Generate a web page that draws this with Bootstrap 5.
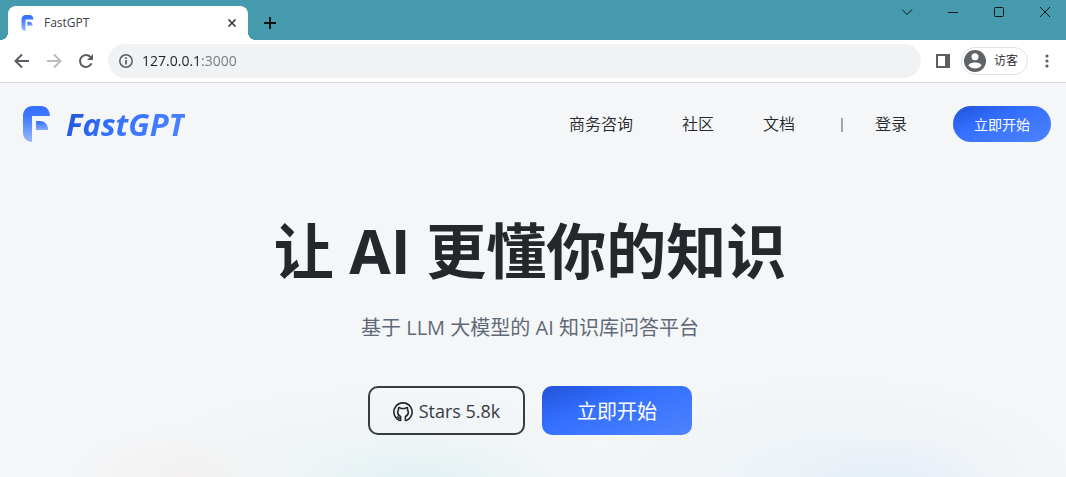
<!DOCTYPE html>
<html lang="zh-CN">
<head>
<meta charset="utf-8">
<meta name="viewport" content="width=device-width, initial-scale=1">
<title>FastGPT</title>
<link href="https://cdn.jsdelivr.net/npm/bootstrap@5.3.0/dist/css/bootstrap.min.css" rel="stylesheet">
<style>
  body { font-family: "Open Sans", "Noto Sans CJK SC", sans-serif; color: #24282c; background: #f4f6f8; overflow: hidden; }
  svg { display: block; flex: none; }
  .plain-btn { display: flex; align-items: center; justify-content: center; padding: 0; border: 0; background: none; color: inherit; }

  .tabstrip { height: 40px; padding-left: 8px; background: #469aad; color: #101416; }
  .tab { position: relative; width: 240px; height: 34px; padding: 0 10px 0 13px; background: #fff; border-radius: 8px 8px 0 0; font-size: 12px; color: #3c4043; }
  .tab::before, .tab::after { content: ""; position: absolute; bottom: 0; width: 8px; height: 8px; }
  .tab::before { right: 100%; background: radial-gradient(circle at 0 0, transparent 8px, #fff 8px); }
  .tab::after { left: 100%; background: radial-gradient(circle at 100% 0, transparent 8px, #fff 8px); }
  .tab-title { margin-left: 10px; }
  .new-tab { width: 44px; height: 34px; }
  .window-btns { margin-right: -2px; }
  .window-btn { width: 46px; height: 24px; }

  .toolbar { height: 43px; padding: 4px 16px 4px 8px; background: #fff; border-bottom: 1px solid #d9dce1; color: #5a5e63; }
  .tool-btn { width: 28px; height: 28px; }
  .address { height: 34px; padding-left: 11px; border-radius: 17px; background: #f0f2f4; }
  .address input { border: 0; outline: 0; padding: 0 0 2px 1px; font-size: 14px; color: transparent; background: linear-gradient(90deg, #202124 60px, #73777c 60px); -webkit-background-clip: text; background-clip: text; }
  .guest { height: 28px; padding: 0 9px 0 2px; border: 1px solid #dfe1e5; border-radius: 14px; font-size: 12px; font-weight: 350; color: #202124; }

  .site-header { padding: 23px 15px 0 23px; }
  .brand { gap: 16px; text-decoration: none; }
  .brand-name { font-size: 31px; line-height: 36px; font-weight: 700; font-style: italic; color: transparent; background: linear-gradient(120deg, #2152d9 0%, #3370ff 40%, #4e83fd 100%); -webkit-background-clip: text; background-clip: text; }
  .site-nav { font-size: 16px; font-weight: 350; }
  .site-nav a { color: #24282c; text-decoration: none; }
  .menu-links { gap: 49px; }
  .divider { width: 2px; height: 14px; margin: 2px 32px 0 46px; background: #a2a8ae; }
  .fill-btn { border: 0; color: #fff; background: linear-gradient(160deg, #2152d9 0%, #3370ff 40%, #4e83fd 100%); }
  .start-small { width: 98px; height: 36px; margin-left: 46px; border-radius: 18px; font-size: 14px; }

  .hero { min-height: 335px; padding: 73px 6px 0 0; background:
    radial-gradient(ellipse 110px 50px at 17% 100%, rgba(245,226,218,.25), transparent),
    radial-gradient(ellipse 130px 50px at 40% 102%, rgba(190,232,230,.25), transparent),
    radial-gradient(ellipse 240px 90px at 35% 100%, rgba(225,240,244,.4), transparent),
    radial-gradient(ellipse 110px 50px at 84% 102%, rgba(205,222,252,.25), transparent),
    radial-gradient(ellipse 240px 100px at 78% 100%, rgba(226,238,246,.5), transparent); }
  .hero h1 { font-size: 60px; line-height: 72px; font-weight: 700; margin-bottom: 27px; }
  .hero p { font-size: 20px; line-height: 28px; color: #5f6977; margin-bottom: 44px; }
  .actions { gap: 17px; font-size: 20px; }
  .star-btn { width: 157px; height: 49px; gap: 6px; padding-top: 2px; border: 2px solid #363c42; border-radius: 10px; color: #363c42; text-decoration: none; font-size: 18px; }
  .start-large { width: 150px; height: 49px; padding-top: 4px; border-radius: 10px; }
</style>
</head>
<body>
<svg width="0" height="0" class="position-absolute" aria-hidden="true">
  <defs>
    <linearGradient id="markFill" x1="0" y1="0" x2="0" y2="36" gradientUnits="userSpaceOnUse">
      <stop offset="0" stop-color="#326dff"/><stop offset=".3" stop-color="#4079ff"/><stop offset="1" stop-color="#9abaff"/>
    </linearGradient>
    <linearGradient id="innerFill" x1="0" y1="15" x2="0" y2="24" gradientUnits="userSpaceOnUse">
      <stop offset="0" stop-color="#3570ff"/><stop offset="1" stop-color="#86abff"/>
    </linearGradient>
    <symbol id="fast-mark" viewBox="0 0 27 36">
      <path fill="url(#markFill)" d="M10 0H18C23 0 27 4 27 10H9V36C4 36 0 32 0 27V10C0 4 4 0 10 0Z"/>
      <path fill="url(#innerFill)" d="M13 15H17C21 15 25 18 25 24H13Z"/>
    </symbol>
  </defs>
</svg>

<div class="tabstrip d-flex align-items-end">
  <div class="tab d-flex align-items-center">
    <svg width="13" height="16"><use href="#fast-mark"/></svg>
    <span class="tab-title flex-grow-1">FastGPT</span>
    <button class="plain-btn" aria-label="关闭标签页"><svg width="12" height="12" fill="none" stroke="#35393c" stroke-width="1.7"><path d="M2.500 2.500l7 7M9.500 2.500l-7 7"/></svg></button>
  </div>
  <button class="plain-btn new-tab" aria-label="新标签页"><svg width="14" height="14" fill="none" stroke="currentColor" stroke-width="2"><path d="M7 1v12M1 7h12"/></svg></button>
  <div class="window-btns d-flex ms-auto align-self-start">
    <button class="plain-btn window-btn" aria-label="搜索标签页"><svg width="12" height="12" fill="none" stroke="currentColor"><path d="M1 3.500l5 5 5-5"/></svg></button>
    <button class="plain-btn window-btn" aria-label="最小化"><svg width="12" height="12" fill="none" stroke="currentColor"><path d="M1 6.500h10"/></svg></button>
    <button class="plain-btn window-btn" aria-label="最大化"><svg width="12" height="12" fill="none" stroke="currentColor"><rect x="1.500" y="1.500" width="9" height="9" rx="1"/></svg></button>
    <button class="plain-btn window-btn" aria-label="关闭"><svg width="12" height="12" fill="none" stroke="currentColor"><path d="M1 1l10 10M11 1L1 11"/></svg></button>
  </div>
</div>

<div class="toolbar d-flex align-items-center">
  <div class="d-flex gap-1 me-2">
    <button class="plain-btn tool-btn" aria-label="后退"><svg width="16" height="16" fill="none" stroke="currentColor" stroke-width="2"><path d="M15 8H2M8 1.500L1.500 8 8 14.500"/></svg></button>
    <button class="plain-btn tool-btn" aria-label="前进" disabled><svg width="16" height="16" fill="none" stroke="#b9bbbe" stroke-width="2"><path d="M1 8h13M8 1.500L14.500 8 8 14.500"/></svg></button>
    <button class="plain-btn tool-btn" aria-label="刷新"><svg width="16" height="16" fill="none" stroke="currentColor" stroke-width="2"><path d="M13.500 10.300A6 6 0 1 1 12.500 4"/><path fill="currentColor" stroke="none" d="M15 1v6H9z"/></svg></button>
  </div>
  <div class="address d-flex align-items-center flex-grow-1 me-2">
    <svg width="14" height="14" fill="none" stroke="currentColor" stroke-width="1.500"><circle cx="7" cy="7" r="6.200"/><path stroke-width="1.700" d="M7 6v4.500M7 3.200v1.700"/></svg>
    <input class="flex-grow-1 ms-2" type="text" value="127.0.0.1:3000" aria-label="地址栏" spellcheck="false">
  </div>
  <button class="plain-btn tool-btn" aria-label="侧边栏"><svg width="14" height="14"><path fill="currentColor" fill-rule="evenodd" d="M0 0h14v14H0zM2 2v10h7V2z"/></svg></button>
  <button class="plain-btn guest ms-1" type="button">
    <svg width="22" height="22"><circle cx="11" cy="11" r="11" fill="#5f6368"/><circle cx="11" cy="6.800" r="3.500" fill="#fff"/><path fill="#fff" d="M4.500 15.500C5 11.500 17 11.500 17.500 15.500 15 19.500 7 19.500 4.500 15.500Z"/></svg>
    <span class="ms-2">访客</span>
  </button>
  <button class="plain-btn ms-3" aria-label="菜单"><svg width="6" height="14" fill="currentColor"><circle cx="3" cy="2" r="1.600"/><circle cx="3" cy="7" r="1.600"/><circle cx="3" cy="12" r="1.600"/></svg></button>
</div>

<header class="site-header d-flex align-items-center justify-content-between">
  <a class="brand d-flex align-items-center" href="#">
    <svg width="27" height="36"><use href="#fast-mark"/></svg>
    <span class="brand-name">FastGPT</span>
  </a>
  <nav class="site-nav d-flex align-items-center">
    <div class="menu-links d-flex">
      <a href="#">商务咨询</a><a href="#">社区</a><a href="#">文档</a>
    </div>
    <span class="divider"></span>
    <a href="#">登录</a>
    <button class="fill-btn start-small" type="button">立即开始</button>
  </nav>
</header>

<main class="hero text-center">
  <h1>让 AI 更懂你的知识</h1>
  <p>基于 LLM 大模型的 AI 知识库问答平台</p>
  <div class="actions d-flex justify-content-center">
    <a class="star-btn d-flex align-items-center justify-content-center" href="#">
      <svg width="20" height="20" fill="none" stroke="#24282c" stroke-width="1.600" stroke-linejoin="round"><path d="M7.500 18.700A9.100 9.100 0 1 1 12.500 18.700"/><path d="M7.600 19v-4.500C5.500 13.800 4.700 12.500 4.700 10.300c0-1 .3-1.700.8-2.300-.2-.9-.1-1.800.2-2.500 1 0 1.800.5 2.400 1h3.800c.6-.5 1.400-1 2.400-1 .3.700.4 1.600.2 2.500.5.600.8 1.300.8 2.300 0 2.200-.8 3.500-2.900 4.200V19M7.500 16.300c-1.500.4-2.300-.3-3.300-1.900"/></svg>
      <span>Stars 5.8k</span>
    </a>
    <button class="fill-btn start-large" type="button">立即开始</button>
  </div>
</main>
<script src="https://cdn.jsdelivr.net/npm/bootstrap@5.3.0/dist/js/bootstrap.bundle.min.js"></script>
</body>
</html>
